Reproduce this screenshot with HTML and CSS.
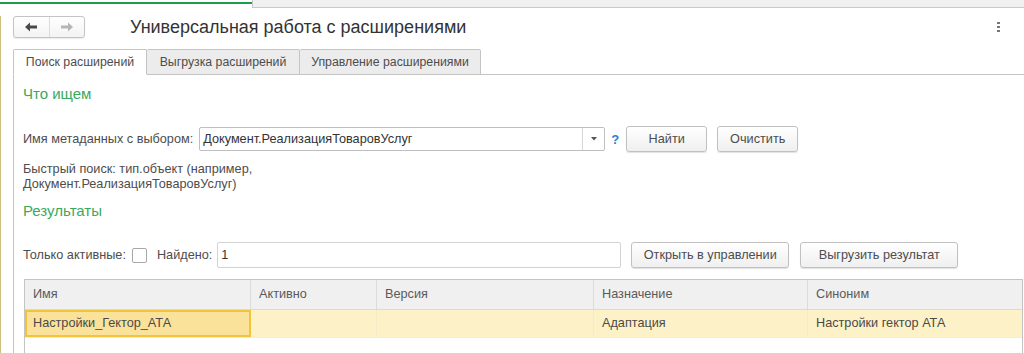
FILE: index.html
```html
<!DOCTYPE html>
<html lang="ru">
<head>
<meta charset="utf-8">
<title>Универсальная работа с расширениями</title>
<link rel="stylesheet" href="styles.css">
</head>
<body>
<div class="topbar">
  <div class="topbar-active"></div>
  <div class="topbar-rest"></div>
</div>
<div class="window">
  <div class="header">
    <div class="nav">
      <button class="nav-btn" aria-label="Назад">
        <svg width="14" height="10" viewBox="0 0 14 10"><path d="M1 5 L6 0.5 L6 3.5 L13 3.5 L13 6.5 L6 6.5 L6 9.5 Z" fill="#4a4a4a"/></svg>
      </button>
      <span class="nav-sep"></span>
      <button class="nav-btn" aria-label="Вперёд">
        <svg width="14" height="10" viewBox="0 0 14 10"><path d="M13 5 L8 0.5 L8 3.5 L1 3.5 L1 6.5 L8 6.5 L8 9.5 Z" fill="#b5b5b5"/></svg>
      </button>
    </div>
    <h1 class="title">Универсальная работа с расширениями</h1>
    <div class="kebab"><span></span><span></span><span></span></div>
  </div>

  <div class="tabs">
    <div class="tab tab-active">Поиск расширений</div>
    <div class="tab">Выгрузка расширений</div>
    <div class="tab">Управление расширениями</div>
  </div>

  <div class="panel">
    <div class="group-title group-title-first">Что ищем</div>

    <div class="row row-search">
      <span class="label">Имя метаданных с выбором:</span>
      <div class="combo">
        <span class="combo-text">Документ.РеализацияТоваровУслуг</span>
        <span class="combo-btn"><svg width="6" height="4" viewBox="0 0 6 4"><path d="M0 0 H6 L3 3.5 Z" fill="#555"/></svg></span>
      </div>
      <span class="help">?</span>
      <button class="btn btn-find">Найти</button>
      <button class="btn btn-clear">Очистить</button>
    </div>

    <div class="hint">Быстрый поиск: тип.объект (например,<br>Документ.РеализацияТоваровУслуг)</div>

    <div class="group-title group-title-results">Результаты</div>

    <div class="row row-results">
      <span class="label">Только активные:</span>
      <span class="checkbox"></span>
      <span class="label label-found">Найдено:</span>
      <div class="field"><span>1</span></div>
      <button class="btn btn-open">Открыть в управлении</button>
      <button class="btn btn-export">Выгрузить результат</button>
    </div>

    <div class="table">
      <div class="tr th">
        <div class="c c1">Имя</div>
        <div class="c c2">Активно</div>
        <div class="c c3">Версия</div>
        <div class="c c4">Назначение</div>
        <div class="c c5">Синоним</div>
      </div>
      <div class="tr td selected">
        <div class="c c1 current">Настройки_Гектор_АТА</div>
        <div class="c c2"></div>
        <div class="c c3"></div>
        <div class="c c4">Адаптация</div>
        <div class="c c5">Настройки гектор АТА</div>
      </div>
    </div>
  </div>
</div>
</body>
</html>
```

FILE: styles.css
```css
* { box-sizing: border-box; }
html, body { margin: 0; padding: 0; background: #fff; overflow: hidden; }
body {
  font-family: "Liberation Sans", Arial, sans-serif;
  font-size: 12.7px;
  color: #4d4d4d;
  width: 1024px;
  height: 353px;
}

.topbar { display: flex; height: 8px; }
.topbar-active {
  width: 252px;
  background: #fff;
  border-top: 2px solid #fff;
}
.topbar-active::before {
  content: "";
  display: block;
  height: 2px;
  background: #1e9b4b;
}
.topbar-rest {
  flex: 1;
  background: #f0f0f0;
  border-left: 1px solid #c8c8c8;
  border-bottom: 1px solid #c8c8c8;
}

.window {
  border-left: 1px solid #cdbf80;
  height: 345px;
  padding-left: 12px;
}

.header {
  display: flex;
  align-items: center;
  height: 22px;
  margin-top: 8px;
}
.nav {
  display: flex;
  align-items: center;
  width: 72px;
  height: 22px;
  border: 1px solid #c4c4c4;
  border-radius: 3px;
  background: linear-gradient(#ffffff, #f3f3f3);
  box-shadow: 0 1px 1px rgba(0,0,0,0.08);
}
.nav-btn {
  flex: 1;
  height: 100%;
  border: 0;
  background: transparent;
  padding: 0;
  display: flex;
  align-items: center;
  justify-content: center;
}
.nav-sep { width: 1px; height: 20px; background: #dcdcdc; }

.title {
  margin: 0 0 0 45px;
  font-size: 18px;
  line-height: 22px;
  font-weight: normal;
  color: #333;
  flex: 1;
}
.kebab {
  display: flex;
  flex-direction: column;
  gap: 2px;
  margin: 0 24px 0 0;
}
.kebab span { width: 3px; height: 2px; background: #777; display: block; }

.tabs {
  display: flex;
  height: 26px;
  margin-top: 11px;
}
.tab {
  height: 26px;
  padding: 0;
  text-align: center;
  white-space: nowrap;
  line-height: 25px;
  font-size: 12.3px;
  color: #4d4d4d;
  background: #ececec;
  border: 1px solid #c4c4c4;
  border-left: 0;
  border-radius: 2px 2px 0 0;
}
.tab-active {
  background: #fff;
  border-left: 1px solid #c4c4c4;
  border-bottom-color: #fff;
  width: 134px;
  position: relative;
  z-index: 1;
}
.tab:nth-child(2) { width: 153px; }
.tab:nth-child(3) { width: 181px; }

.panel {
  margin-top: -1px;
  border-top: 1px solid #c4c4c4;
  border-left: 1px solid #c4c4c4;
  width: 1011px;
  height: 280px;
  padding-left: 9px;
}

.group-title {
  font-size: 15px;
  color: #3aa85e;
  line-height: 18px;
}
.group-title-first { margin-top: 10px; }
.group-title-results { margin-top: 10px; }

.row { display: flex; align-items: center; }
.row-search { margin-top: 23px; height: 26px; }

.label { white-space: nowrap; }
.combo {
  display: flex;
  margin-left: 6px;
  width: 406px;
  height: 24px;
  border: 1px solid #bfbfbf;
  border-radius: 2px;
  background: #fff;
}
.combo-text { flex: 1; padding-left: 3px; line-height: 22px; color: #333; }
.combo-btn {
  width: 22px;
  border-left: 1px solid #d6d6d6;
  display: flex;
  align-items: center;
  justify-content: center;
}
.help {
  margin-left: 6px;
  color: #2a7ed6;
  font-weight: bold;
  font-size: 13px;
  width: 8px;
}
.btn {
  font-family: "Liberation Sans", Arial, sans-serif;
  font-size: 12.7px;
  color: #4d4d4d;
  height: 26px;
  border: 1px solid #c1c1c1;
  border-radius: 3px;
  background: linear-gradient(#ffffff, #efefef);
  box-shadow: 0 1px 1px rgba(0,0,0,0.12);
  padding: 0;
}
.btn-find { width: 81px; margin-left: 7px; }
.btn-clear { width: 81px; margin-left: 10px; }

.hint {
  margin-top: 10px;
  line-height: 15px;
  color: #4d4d4d;
}

.row-results { margin-top: 22px; height: 26px; }
.checkbox {
  width: 15px;
  height: 15px;
  border: 1px solid #a8a8a8;
  border-radius: 2px;
  margin-left: 6px;
  background: #fff;
}
.label-found { margin-left: 10px; }
.field {
  margin-left: 5px;
  width: 404px;
  height: 26px;
  border: 1px solid #d3d3d3;
  border-radius: 2px;
  line-height: 24px;
  padding-left: 3px;
  color: #333;
}
.btn-open { width: 158px; margin-left: 10px; }
.btn-export { width: 158px; margin-left: 11px; }

.table {
  margin-top: 11px;
  margin-left: 1px;
  border: 1px solid #c4c4c4;
  width: 999px;
  height: 80px;
}
.tr { display: flex; }
.th { height: 30px; background: #f0f0f0; border-bottom: 1px solid #dadada; }
.td { height: 28px; border-bottom: 1px solid #ececec; }
.selected { background: #fdf2c7; }
.c {
  padding-left: 8px;
  line-height: 29px;
  color: #555;
  white-space: nowrap;
  border-right: 1px solid #dcdcdc;
}
.th .c { color: #5a5a5a; }
.td .c { line-height: 27px; color: #4a4a4a; border-right-color: #f4ebc8; }
.c1 { width: 226px; }
.c2 { width: 126px; }
.c3 { width: 217px; }
.c4 { width: 214px; }
.c5 { flex: 1; border-right: 0; }
.td .current {
  background: #fbe29a;
  border: 2px solid #f2c43c;
  line-height: 23px;
  padding-left: 6px;
}
```
